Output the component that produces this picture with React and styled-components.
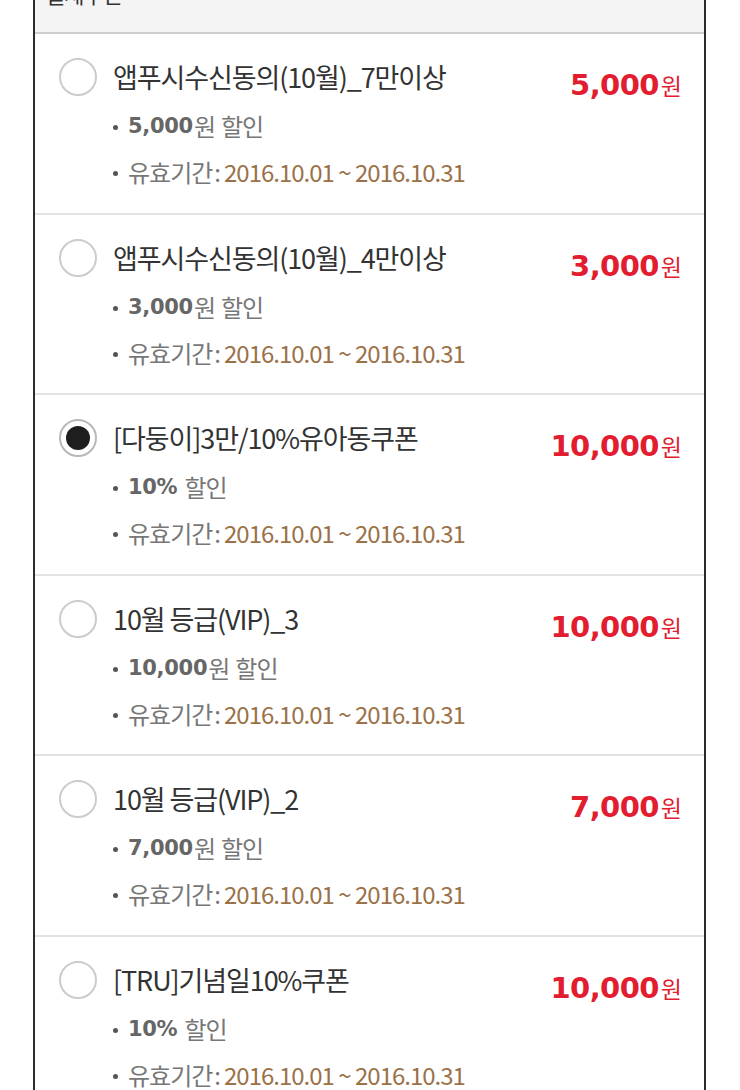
import styled, { createGlobalStyle } from "styled-components";

const GlobalStyle = createGlobalStyle`
  html, body { margin: 0; padding: 0; background: #fff; }
  body { font-family: "Noto Sans CJK KR", "Noto Sans", sans-serif; overflow: hidden; }
`;

const coupons = [
  { name: "앱푸시수신동의(10월)_7만이상", amount: "5,000", unit: "원", price: "5,000" },
  { name: "앱푸시수신동의(10월)_4만이상", amount: "3,000", unit: "원", price: "3,000" },
  { name: "[다둥이]3만/10%유아동쿠폰", amount: "10%", unit: "", price: "10,000", checked: true },
  { name: "10월 등급(VIP)_3", amount: "10,000", unit: "원", price: "10,000" },
  { name: "10월 등급(VIP)_2", amount: "7,000", unit: "원", price: "7,000" },
  { name: "[TRU]기념일10%쿠폰", amount: "10%", unit: "", price: "10,000" },
];

const Panel = styled.div`
  margin: 0 34px 0 33px;
  border-left: 2px solid #2b2b2b;
  border-right: 2px solid #2b2b2b;
  min-height: 1200px;
`;

const Header = styled.div`
  height: 60px;
  box-sizing: border-box;
  margin-top: -26px;
  padding: 4px 0 0 10px;
  background: #f4f4f4;
  border-bottom: 2px solid #cfcfcf;
  font-size: 22px;
  line-height: 30px;
  color: #333;
  letter-spacing: -1px;
`;

const Row = styled.label`
  display: grid;
  grid-template-columns: 38px 1fr auto;
  column-gap: 16px;
  padding: 25px 22px 17.5px 24px;
  border-bottom: 2px solid #e3e3e3;
`;

const Radio = styled.span`
  width: 38px;
  height: 38px;
  margin-top: -1px;
  box-sizing: border-box;
  border-radius: 50%;
  border: 2px solid ${(p) => (p.checked ? "#b8b8b8" : "#cccccc")};
  background: #fff;
  display: flex;
  align-items: center;
  justify-content: center;
  &::after {
    content: "";
    width: 24px;
    height: 24px;
    border-radius: 50%;
    background: #1e1e1e;
    display: ${(p) => (p.checked ? "block" : "none")};
  }
`;

const Info = styled.div`
  display: flex;
  flex-direction: column;
`;

const Title = styled.div`
  font-size: 27px;
  line-height: 36px;
  color: #333;
  letter-spacing: -1.1px;
  margin-bottom: 8px;
  white-space: nowrap;
`;

const Line = styled.div`
  display: flex;
  align-items: center;
  font-size: 24px;
  line-height: 46px;
  color: #777;
  letter-spacing: -1px;
  white-space: nowrap;
  &::before {
    content: "";
    width: 5px;
    height: 5px;
    border-radius: 50%;
    background: #555;
    margin: 3px 10px 0 0;
  }
`;

const Strong = styled.b`
  font-family: "DejaVu Sans", sans-serif;
  font-size: 21px;
  font-weight: 700;
  color: #666;
  letter-spacing: -0.3px;
  margin-right: 1px;
`;

const Gap = styled.span`
  margin-left: 6px;
`;

const Colon = styled.span`
  margin: 0 4px 0 2px;
`;

const DateText = styled.span`
  color: #9b7148;
`;

const Price = styled.div`
  margin-top: 8px;
  color: #e21d30;
  font-family: "DejaVu Sans", sans-serif;
  font-size: 29px;
  line-height: 36px;
  font-weight: 700;
  letter-spacing: -0.6px;
  white-space: nowrap;
`;

const Won = styled.span`
  font-family: "Noto Sans CJK KR", sans-serif;
  font-size: 23px;
  font-weight: 400;
  letter-spacing: 0;
  margin-left: 2px;
`;

export default function App() {
  return (
    <>
      <GlobalStyle />
      <Panel>
        <Header>결제수단</Header>
        {coupons.map((c) => (
          <Row key={c.name}>
            <Radio checked={c.checked} />
            <Info>
              <Title>{c.name}</Title>
              <Line>
                <Strong>{c.amount}</Strong>
                {c.unit}
                <Gap>할인</Gap>
              </Line>
              <Line>
                유효기간<Colon>:</Colon>
                <DateText>2016.10.01 ~ 2016.10.31</DateText>
              </Line>
            </Info>
            <Price>
              {c.price}
              <Won>원</Won>
            </Price>
          </Row>
        ))}
      </Panel>
    </>
  );
}
